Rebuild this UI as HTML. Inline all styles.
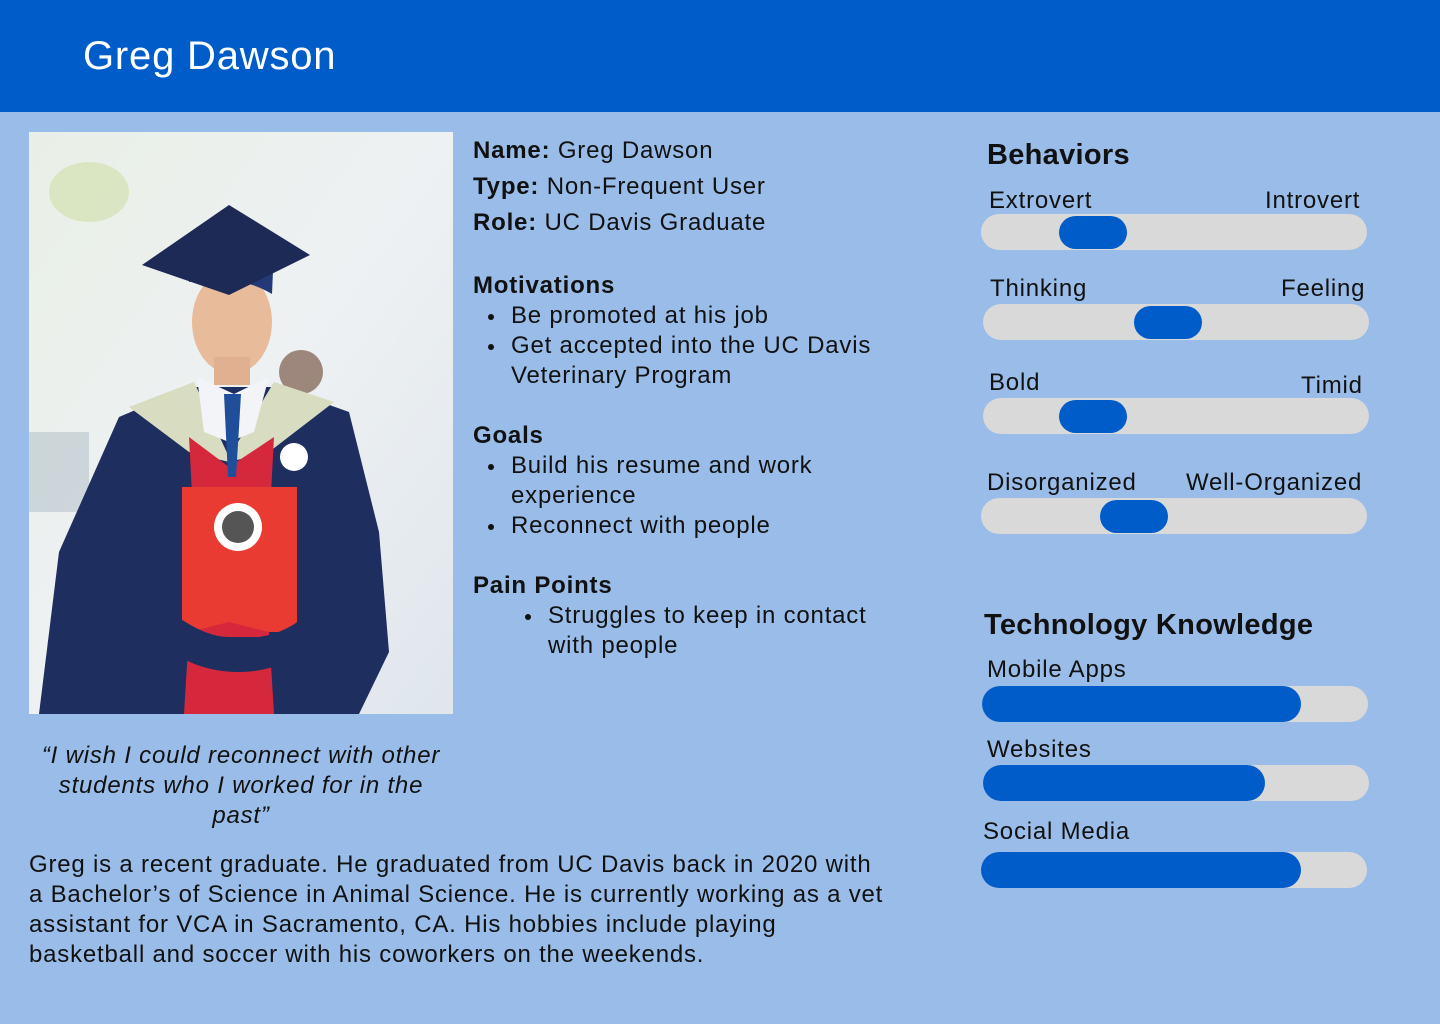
<!DOCTYPE html>
<html><head><meta charset="utf-8">
<style>
*{margin:0;padding:0;box-sizing:border-box}
body{width:1440px;height:1024px;background:#99bde8;font-family:"Liberation Sans",sans-serif;color:#111;position:relative;overflow:hidden;font-size:24px;letter-spacing:0.8px}
.hdr{position:absolute;left:0;top:0;width:1440px;height:112px;background:#005cc8}
.hdr h1{position:absolute;left:83px;top:34px;font-weight:400;font-size:40px;color:#fff;letter-spacing:0.8px}
.t{position:absolute;white-space:nowrap;line-height:30px}
.track{position:absolute;height:36px;border-radius:18px;background:#d9d9d9}
.knob{position:absolute;top:2px;height:33px;width:68px;border-radius:17px;background:#005cc8}
.fill{position:absolute;left:0;top:0;height:36px;border-radius:18px;background:#005cc8}
ul{list-style:none}
.b{position:absolute;line-height:30px}
.b li{position:relative;padding-left:38px}
.b li:before{content:"";position:absolute;left:15px;top:13px;width:6px;height:6px;border-radius:50%;background:#111}
h2{font-size:29px;letter-spacing:0.3px}
</style></head><body>
<div class="hdr"><h1>Greg Dawson</h1></div>

<svg style="position:absolute;left:29px;top:132px" width="424" height="582" viewBox="0 0 424 582">
<defs><linearGradient id="bg" x1="0" y1="0" x2="1" y2="1"><stop offset="0" stop-color="#e9efe6"/><stop offset="0.5" stop-color="#eef1f3"/><stop offset="1" stop-color="#dfe6ec"/></linearGradient></defs>
<rect width="424" height="582" fill="url(#bg)"/>
<rect x="0" y="300" width="60" height="80" fill="#b8c4cc" opacity="0.6"/>
<ellipse cx="60" cy="60" rx="40" ry="30" fill="#cfe0a8" opacity="0.6"/>
<ellipse cx="272" cy="240" rx="22" ry="22" fill="#7a5a48" opacity="0.7"/>
<path d="M10 582 L30 420 L90 285 L160 255 L250 255 L320 280 L350 400 L360 520 L330 582 Z" fill="#1e2e5e"/>
<path d="M100 275 L165 250 L200 325 L245 250 L305 270 L240 320 L200 330 L160 320 Z" fill="#d8dcc0"/>
<path d="M160 305 L200 335 L245 305 L240 400 L165 400 Z" fill="#d6283c"/>
<path d="M168 245 L205 262 L240 245 L225 300 L200 310 L175 300 Z" fill="#f2f4f8"/>
<path d="M195 262 L212 262 L207 345 L199 345 Z" fill="#1f4f9a"/>
<rect x="153" y="355" width="115" height="145" fill="#ea3b32"/>
<circle cx="209" cy="395" r="24" fill="#fff"/><circle cx="209" cy="395" r="16" fill="#555"/>
<path d="M155 582 L160 500 L200 490 L240 500 L245 582 Z" fill="#d6283c"/>
<ellipse cx="203" cy="190" rx="40" ry="52" fill="#e8bb9a"/>
<rect x="185" y="225" width="36" height="28" fill="#e0b090"/>
<path d="M160 150 L162 120 L245 116 L243 162 Q205 140 160 150 Z" fill="#243a78"/>
<path d="M200 73 L281 123 L200 163 L113 133 Z" fill="#1c2a55"/>
<circle cx="265" cy="325" r="14" fill="#fff"/>
<path d="M130 470 Q170 505 200 505 L230 505 Q265 500 290 470 L300 500 Q260 540 210 540 Q160 540 125 505 Z" fill="#1e2e5e"/>
</svg>

<div class="t" style="left:473px;top:136px"><b>Name:</b> Greg Dawson</div>
<div class="t" style="left:473px;top:172px"><b>Type:</b> Non-Frequent User</div>
<div class="t" style="left:473px;top:208px"><b>Role:</b> UC Davis Graduate</div>

<div class="t" style="left:473px;top:271px"><b>Motivations</b></div>
<ul class="b" style="left:473px;top:301px;width:440px"><li>Be promoted at his job</li><li>Get accepted into the UC Davis Veterinary Program</li></ul>

<div class="t" style="left:473px;top:421px"><b>Goals</b></div>
<ul class="b" style="left:473px;top:451px;width:380px"><li>Build his resume and work experience</li><li>Reconnect with people</li></ul>

<div class="t" style="left:473px;top:571px"><b>Pain Points</b></div>
<ul class="b" style="left:510px;top:601px;width:380px"><li>Struggles to keep in contact with people</li></ul>

<div class="t" style="left:29px;top:741px;width:424px;white-space:normal;text-align:center;font-style:italic">“I wish I could reconnect with other students who I worked for in the past”</div>

<div class="t" style="left:29px;top:850px;width:862px;white-space:normal">Greg is a recent graduate. He graduated from UC Davis back in 2020 with a Bachelor’s of Science in Animal Science. He is currently working as a vet assistant for VCA in Sacramento, CA. His hobbies include playing basketball and soccer with his coworkers on the weekends.</div>

<div class="t" style="left:987px;top:138px;line-height:34px"><h2>Behaviors</h2></div>
<div class="t" style="left:989px;top:186px">Extrovert</div><div class="t" style="left:1265px;top:186px">Introvert</div>
<div class="track" style="left:981px;top:214px;width:386px"><div class="knob" style="left:78px"></div></div>
<div class="t" style="left:990px;top:274px">Thinking</div><div class="t" style="left:1281px;top:274px">Feeling</div>
<div class="track" style="left:983px;top:304px;width:386px"><div class="knob" style="left:151px"></div></div>
<div class="t" style="left:989px;top:368px">Bold</div><div class="t" style="left:1301px;top:371px">Timid</div>
<div class="track" style="left:983px;top:398px;width:386px"><div class="knob" style="left:76px"></div></div>
<div class="t" style="left:987px;top:468px">Disorganized</div><div class="t" style="left:1186px;top:468px">Well-Organized</div>
<div class="track" style="left:981px;top:498px;width:386px"><div class="knob" style="left:119px"></div></div>

<div class="t" style="left:984px;top:608px;line-height:34px"><h2>Technology Knowledge</h2></div>
<div class="t" style="left:987px;top:655px">Mobile Apps</div>
<div class="track" style="left:982px;top:686px;width:386px"><div class="fill" style="width:319px"></div></div>
<div class="t" style="left:987px;top:735px">Websites</div>
<div class="track" style="left:983px;top:765px;width:386px"><div class="fill" style="width:282px"></div></div>
<div class="t" style="left:983px;top:817px">Social Media</div>
<div class="track" style="left:981px;top:852px;width:386px"><div class="fill" style="width:320px"></div></div>
</body></html>
